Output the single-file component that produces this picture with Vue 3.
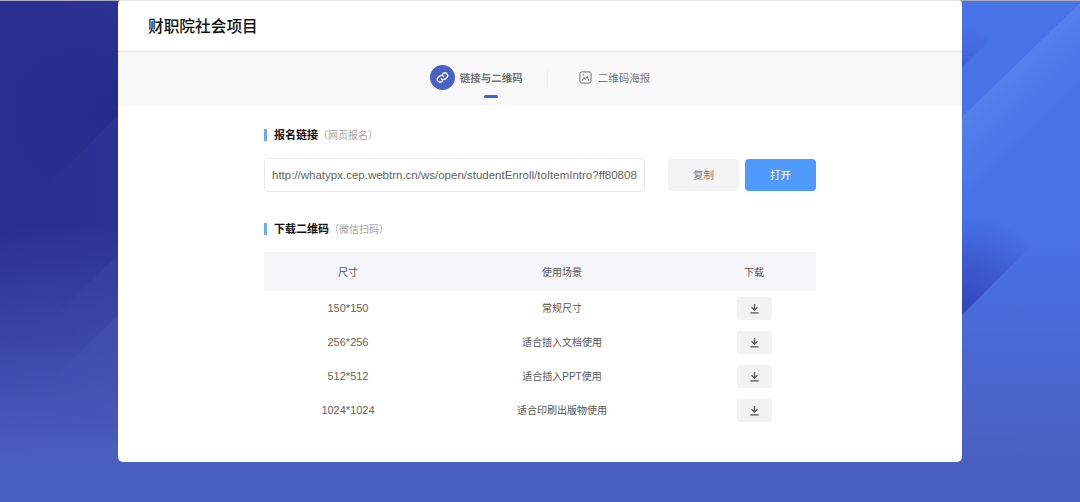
<script setup>
const sizes = [
  { size: '150*150', usage: '常规尺寸' },
  { size: '256*256', usage: '适合插入文档使用' },
  { size: '512*512', usage: '适合插入PPT使用' },
  { size: '1024*1024', usage: '适合印刷出版物使用' }
]
const url = 'http://whatypx.cep.webtrn.cn/ws/open/studentEnroll/toItemIntro?ff8080818'
</script>

<template>
  <div class="page">
    <svg class="bg-shapes" width="1080" height="502" viewBox="0 0 1080 502">
      <defs>
        <linearGradient id="lightBand" x1="1015" y1="65" x2="1060" y2="110" gradientUnits="userSpaceOnUse">
          <stop offset="0" stop-color="#6f98f2" stop-opacity="0.36" />
          <stop offset="1" stop-color="#6f98f2" stop-opacity="0" />
        </linearGradient>
        <radialGradient id="darkWedge" cx="962" cy="315" r="100" gradientUnits="userSpaceOnUse">
          <stop offset="0" stop-color="#2c3cb4" stop-opacity="0.85" />
          <stop offset="1" stop-color="#2c3cb4" stop-opacity="0" />
        </radialGradient>
        <radialGradient id="darkTop" cx="962" cy="68" r="42" gradientUnits="userSpaceOnUse">
          <stop offset="0" stop-color="#2f3fb8" stop-opacity="0.35" />
          <stop offset="1" stop-color="#2f3fb8" stop-opacity="0" />
        </radialGradient>
        <radialGradient id="darkLeft" cx="118" cy="115" r="110" gradientUnits="userSpaceOnUse">
          <stop offset="0" stop-color="#21247f" stop-opacity="0.55" />
          <stop offset="1" stop-color="#21247f" stop-opacity="0" />
        </radialGradient>
        <radialGradient id="lightLeft" cx="118" cy="315" r="100" gradientUnits="userSpaceOnUse">
          <stop offset="0" stop-color="#5a72cc" stop-opacity="0.18" />
          <stop offset="1" stop-color="#5a72cc" stop-opacity="0" />
        </radialGradient>
        <radialGradient id="lightLeft2" cx="118" cy="255" r="100" gradientUnits="userSpaceOnUse">
          <stop offset="0" stop-color="#4a5fbe" stop-opacity="0.16" />
          <stop offset="1" stop-color="#4a5fbe" stop-opacity="0" />
        </radialGradient>
      </defs>
      <polygon points="962,117 1080,3 1080,200 962,200" fill="url(#lightBand)" />
      <polygon points="962,315 1062,215 962,215" fill="url(#darkWedge)" />
      <polygon points="962,68 1004,26 962,26" fill="url(#darkTop)" />
      <polygon points="118,115 0,235 0,0 118,0" fill="url(#darkLeft)" />
      <polygon points="118,255 0,370 0,480 118,480" fill="url(#lightLeft2)" />
      <polygon points="118,315 0,430 118,480" fill="url(#lightLeft)" />
    </svg>

    <div class="card">
      <div class="card-head">财职院社会项目</div>

      <div class="tabs">
        <div class="tab active">
          <span class="tab-icon">
            <svg width="13" height="13" viewBox="0 0 24 24" fill="none" stroke="#fff" stroke-width="2.6" stroke-linecap="round" stroke-linejoin="round">
              <path d="M10 14a5 5 0 0 0 7.5.5l3-3a5 5 0 0 0-7-7l-1.7 1.7" />
              <path d="M14 10a5 5 0 0 0-7.5-.5l-3 3a5 5 0 0 0 7 7l1.7-1.7" />
            </svg>
          </span>
          <span>链接与二维码</span>
          <i class="tab-line"></i>
        </div>
        <div class="tab-sep"></div>
        <div class="tab">
          <svg width="13" height="13" viewBox="0 0 14 14" fill="none" stroke="#666" stroke-width="1">
            <rect x="1" y="1" width="12" height="12" rx="2" />
            <path d="M3.2 10.6 5.4 7l1.5 2 2-3.2 1.9 4.8" />
            <circle cx="4.6" cy="4.2" r="0.7" fill="#666" stroke="none" />
          </svg>
          <span>二维码海报</span>
        </div>
      </div>

      <div class="content">
        <h3 class="sec-title">报名链接<small>（网页报名）</small></h3>
        <div class="link-row">
          <input class="link-input" type="text" :value="url" readonly />
          <button class="btn copy">复制</button>
          <button class="btn open">打开</button>
        </div>

        <h3 class="sec-title second">下载二维码<small>（微信扫码）</small></h3>
        <table class="qr-table">
          <thead>
            <tr>
              <th class="c1">尺寸</th>
              <th class="c2">使用场景</th>
              <th class="c3">下载</th>
            </tr>
          </thead>
          <tbody>
            <tr v-for="row in sizes" :key="row.size">
              <td class="num">{{ row.size }}</td>
              <td class="usage">{{ row.usage }}</td>
              <td>
                <button class="dl">
                  <svg width="11" height="11" viewBox="0 0 12 12" fill="none" stroke="#555" stroke-width="1.4">
                    <path d="M6 1v6.6" />
                    <path d="M2.8 4.6 6 7.8l3.2-3.2" />
                    <path d="M1.5 10.8h9" />
                  </svg>
                </button>
              </td>
            </tr>
          </tbody>
        </table>
      </div>
    </div>
  </div>
</template>

<style>
html, body {
  margin: 0;
  overflow: hidden;
}
</style>

<style scoped>
.page {
  position: relative;
  width: 1080px;
  height: 502px;
  overflow: hidden;
  background:
    linear-gradient(180deg, rgba(74, 96, 192, 0) 45%, #4a60c0 92%),
    linear-gradient(90deg, #2a2d91 0%, #2d3396 15%, #4872e8 88%, #4872e8 100%);
  font-family: "Liberation Sans", "Noto Sans CJK SC", sans-serif;
}

.page::before {
  content: "";
  position: absolute;
  left: 0;
  right: 0;
  top: 0;
  height: 1px;
  background: #a9a9b8;
  z-index: 1;
}

.bg-shapes {
  position: absolute;
  left: 0;
  top: 0;
}

.card {
  position: relative;
  z-index: 2;
  box-sizing: border-box;
  width: 844px;
  height: 462px;
  margin-left: 118px;
  background: #fff;
  border-top: 1px solid #e8e8e8;
  border-radius: 4px 4px 5px 5px;
  overflow: hidden;
}

.card-head {
  height: 50px;
  padding-left: 30px;
  line-height: 51px;
  font-size: 15.7px;
  font-weight: 500;
  color: #111;
  border-bottom: 1px solid #e6e6e6;
}

.tabs {
  height: 53px;
  padding-left: 10px;
  background: #f8f8f8;
  display: flex;
  align-items: center;
  justify-content: center;
  font-size: 10.5px;
  color: #777;
}

.tab {
  display: flex;
  align-items: center;
  gap: 6px;
  position: relative;
  height: 100%;
  margin-top: -2px;
}

.tab.active {
  gap: 5px;
  font-weight: 700;
  color: #727272;
  margin-left: -10px;
}

.tab-icon {
  width: 25px;
  height: 25px;
  border-radius: 50%;
  background: #4a60c4;
  display: flex;
  align-items: center;
  justify-content: center;
}

.tab-line {
  position: absolute;
  left: 54px;
  bottom: 6px;
  width: 14px;
  height: 3px;
  border-radius: 2px;
  background: #4a60c4;
}

.tab-sep {
  width: 1px;
  height: 18px;
  margin: 0 31px 0 24px;
  background: #efefef;
}

.content {
  padding: 24px 146px 0;
}

.sec-title {
  margin: 0;
  padding-left: 7px;
  border-left: 3px solid #6aaafc;
  height: 12px;
  line-height: 12px;
  font-size: 11px;
  font-weight: 700;
  color: #111;
}

.sec-title small {
  font-size: 10px;
  font-weight: 400;
  color: #a5a5a5;
}

.second {
  margin-top: 31px;
}

.link-row {
  display: flex;
  align-items: center;
  margin-top: 17px;
}

.link-input {
  box-sizing: border-box;
  width: 381px;
  height: 34px;
  padding: 0 7px;
  border: 1px solid #e8e8e8;
  border-radius: 4px;
  outline: none;
  background: #fff;
  font-family: "Liberation Sans", sans-serif;
  font-size: 11.5px;
  color: #5f5f5f;
}

.btn {
  width: 71px;
  height: 32px;
  padding: 0 0 2px;
  border: none;
  border-radius: 4px;
  font-family: "Noto Sans CJK SC", sans-serif;
  font-size: 10.5px;
}

.copy {
  margin-left: 23px;
  background: #f3f3f3;
  color: #777;
}

.open {
  margin-left: 6px;
  background: #4f9bfb;
  color: #fff;
}

.qr-table {
  width: 552px;
  margin-top: 17px;
  border-collapse: collapse;
  table-layout: fixed;
  font-size: 10px;
  color: #555;
  text-align: center;
}

.qr-table th {
  height: 39px;
  padding: 0;
  background: #f5f6f8;
  font-weight: 400;
}

.c1 { width: 168px; }
.c2 { width: 260px; }
.c3 { width: 124px; }

.qr-table td {
  height: 34px;
  padding: 0;
}

.qr-table .usage {
  padding-bottom: 2px;
  height: 32px;
}

.num {
  font-size: 11px;
  color: #6a5f55;
}

.dl {
  display: inline-flex;
  align-items: center;
  justify-content: center;
  width: 35px;
  height: 23px;
  padding: 0;
  border: none;
  border-radius: 3px;
  background: #f2f2f2;
  vertical-align: middle;
}
</style>
